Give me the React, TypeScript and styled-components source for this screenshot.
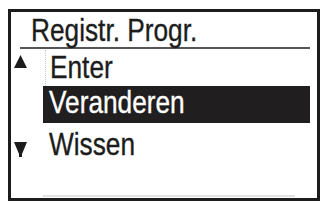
import { FC } from "react";
import styled, { createGlobalStyle } from "styled-components";

const GlobalStyle = createGlobalStyle`
  html, body {
    margin: 0;
    padding: 0;
    background: #ffffff;
  }
  body {
    font-family: "Liberation Sans", Arial, sans-serif;
    color: #1c1c1c;
  }
`;

interface MenuItem {
  label: string;
  selected?: boolean;
  arrow?: "up" | "down";
  guide?: boolean;
}

const items: MenuItem[] = [
  { label: "Enter", arrow: "up", guide: true },
  { label: "Veranderen", selected: true },
  { label: "Wissen", arrow: "down" },
];

const Frame = styled.div`
  box-sizing: border-box;
  margin: 9px 0 0 8px;
  width: 312px;
  height: 192px;
  border: 3px solid #1c1c1c;
  display: flex;
  flex-direction: column;
  overflow: hidden;
`;

const Header = styled.div`
  margin: 0 7px 0 9px;
  padding: 3px 0 2px 11px;
  border-bottom: 2px solid #555555;
  font-size: 32px;
  line-height: 30px;
`;

const Label = styled.span`
  display: inline-block;
  white-space: nowrap;
  transform: scaleX(0.82);
  transform-origin: left center;
  -webkit-text-stroke: 0.35px currentColor;
`;

const List = styled.div`
  display: flex;
  flex-direction: column;
  padding-top: 1px;
`;

const Row = styled.div<{ $height: number; $offset: number }>`
  display: flex;
  align-items: stretch;
  height: ${(p) => p.$height}px;
  margin-top: ${(p) => p.$offset}px;
  margin-right: 7px;
`;

const Marker = styled.div<{ $top: number }>`
  width: 32px;
  flex: none;
  box-sizing: border-box;
  padding: ${(p) => p.$top}px 0 0 3px;
  line-height: 0;
`;

const Item = styled.div<{ $selected?: boolean; $guide?: boolean }>`
  flex: 1;
  box-sizing: border-box;
  padding-left: ${(p) => (p.$guide ? 4 : 6)}px;
  margin-left: ${(p) => (p.$guide ? 2 : 0)}px;
  border-left: ${(p) => (p.$guide ? "1px dotted #c8c8c8" : "none")};
  font-size: 32px;
  line-height: ${(p) => (p.$selected ? 33 : 35)}px;
  background: ${(p) => (p.$selected ? "#211e1f" : "transparent")};
  color: ${(p) => (p.$selected ? "#ffffff" : "#1c1c1c")};
`;

const Footer = styled.div`
  margin: auto 22px 1px 32px;
  height: 2px;
  background: #e2e2e2;
`;

const Arrow: FC<{ dir: "up" | "down" }> = ({ dir }) =>
  dir === "up" ? (
    <svg width="13" height="13" viewBox="0 0 13 13">
      <path d="M6.5 0 L13 13 L0 13 Z" fill="#1c1c1c" />
    </svg>
  ) : (
    <svg width="13" height="15" viewBox="0 0 13 15">
      <path d="M0 0 L13 0 L8 12 L8 15 L5 15 L5 12 Z" fill="#1c1c1c" />
    </svg>
  );

const rowLayout = [
  { height: 36, offset: 0, arrowTop: 5 },
  { height: 37, offset: 0, arrowTop: 0 },
  { height: 36, offset: 4, arrowTop: 15 },
];

const App: FC = () => (
  <>
    <GlobalStyle />
    <Frame>
      <Header>
        <Label>Registr. Progr.</Label>
      </Header>
      <List>
        {items.map((item, i) => (
          <Row key={item.label} $height={rowLayout[i].height} $offset={rowLayout[i].offset}>
            <Marker $top={rowLayout[i].arrowTop}>
              {item.arrow && <Arrow dir={item.arrow} />}
            </Marker>
            <Item $selected={item.selected} $guide={item.guide}>
              <Label>{item.label}</Label>
            </Item>
          </Row>
        ))}
      </List>
      <Footer />
    </Frame>
  </>
);

export default App;
